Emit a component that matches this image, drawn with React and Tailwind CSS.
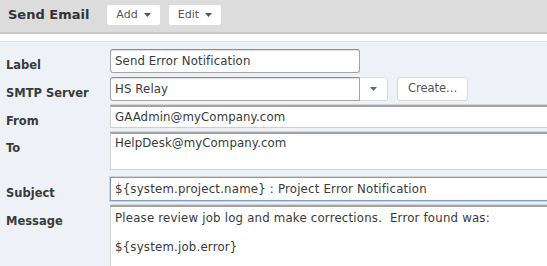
const Caret = ({ color = "#555" }) => (
  <svg width="7" height="4" viewBox="0 0 7 4" className="inline-block">
    <path d="M0 0 L7 0 L3.5 4 Z" fill={color} />
  </svg>
);

const HeaderBtn = ({ label, w }) => (
  <div
    className={`${w} h-[20px] bg-white rounded-[2px] flex items-center justify-center gap-[6px] text-[11px] text-[#555]`}
  >
    <span>{label}</span>
    <Caret />
  </div>
);

const Row = ({ label, children }) => (
  <div className="flex items-start">
    <div className="w-[110px] shrink-0 pl-[6px] pt-[9px] text-[11.5px] leading-[14px] font-bold text-[#3a3a3a]">
      {label}
    </div>
    {children}
  </div>
);

export default function App() {
  return (
    <div className="w-[547px] h-[266px] overflow-hidden bg-[#eef2f7] font-['DejaVu_Sans',Verdana,sans-serif]">
      <div className="h-[32px] bg-[#dcdcdd] flex items-start pt-[5px] pl-[8px]">
        <span className="w-[99px] text-[13px] leading-[20px] font-bold text-[#333]">Send Email</span>
        <HeaderBtn label="Add" w="w-[53px]" />
        <div className="w-[9px]" />
        <HeaderBtn label="Edit" w="w-[52px]" />
      </div>
      <div className="h-[2px] bg-[#c7c7c8]" />
      <div className="h-[8px] bg-white border-b border-[#dde2e8]" />
      <div className="pt-[7px] flex flex-col">
        <Row label="Label">
          <div className="w-[250px] h-[24px] bg-white border border-[#a4a4a4] border-t-[#8c8c8c] rounded-[3px] px-[4px] pt-[4px] text-[11.75px] tracking-[0.1px] leading-[14px] text-[#3a3a3a] shadow-[inset_0_1px_1px_rgba(0,0,0,0.12)]">
            Send Error Notification
          </div>
        </Row>
        <div className="h-[4px]" />
        <Row label="SMTP Server">
          <div className="flex items-start">
            <div className="w-[250px] h-[24px] bg-white border border-[#a4a4a4] border-t-[#8c8c8c] rounded-l-[3px] px-[4px] pt-[4px] text-[11.75px] tracking-[0.1px] leading-[14px] text-[#3a3a3a] shadow-[inset_0_1px_1px_rgba(0,0,0,0.12)]">
              HS Relay
            </div>
            <div className="w-[28px] h-[24px] bg-white border border-l-0 border-[#d9dce1] rounded-r-[3px] flex items-center justify-center">
              <Caret color="#4f6b86" />
            </div>
            <div className="ml-[9px] w-[71px] h-[24px] bg-white border border-[#d9d9d9] rounded-[3px] flex items-center justify-center text-[11.5px] text-[#555]">
              Create...
            </div>
          </div>
        </Row>
        <div className="h-[4px]" />
        <Row label="From">
          <div className="w-[460px] shrink-0 h-[23px] bg-white border border-[#cfcfcf] border-t-2 border-t-[#a3a3a3] px-[4px] pt-[3px] text-[11.75px] tracking-[0.1px] leading-[14px] text-[#3a3a3a] shadow-[0_-1px_0_#d6d6d6]">
            GAAdmin@myCompany.com
          </div>
        </Row>
        <div className="h-[4px]" />
        <Row label="To">
          <div className="w-[460px] shrink-0 h-[38px] bg-white border border-[#cfcfcf] border-t-2 border-t-[#a3a3a3] px-[4px] pt-[2px] text-[11.75px] tracking-[0.1px] leading-[14px] text-[#3a3a3a] shadow-[0_-1px_0_#d6d6d6]">
            HelpDesk@myCompany.com
          </div>
        </Row>
        <div className="h-[7px]" />
        <Row label="Subject">
          <div className="w-[460px] shrink-0 h-[24px] bg-white border border-[#7f9db9] px-[4px] pt-[4px] text-[11.75px] tracking-[0.2px] leading-[14px] text-[#3a3a3a] shadow-[0_0_0_1px_#d3d3d3]">
            {"${system.project.name} : Project Error Notification"}
          </div>
        </Row>
        <div className="h-[4px]" />
        <Row label="Message">
          <div className="w-[460px] shrink-0 h-[80px] bg-white border border-[#cfcfcf] border-t-2 border-t-[#a3a3a3] px-[4px] pt-[4px] text-[11.75px] tracking-[0.2px] leading-[14.5px] text-[#3a3a3a] whitespace-pre shadow-[0_-1px_0_#d6d6d6]">
            {"Please review job log and make corrections.  Error found was:\n\n${system.job.error}"}
          </div>
        </Row>
      </div>
    </div>
  );
}
